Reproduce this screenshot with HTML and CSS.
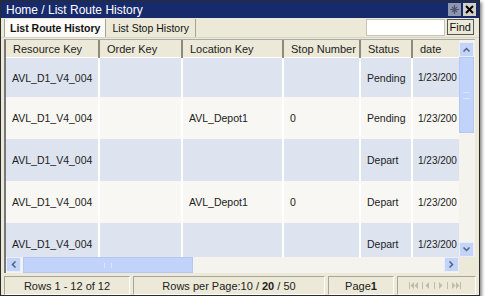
FILE: index.html
```html
<!DOCTYPE html>
<html lang="en">
<head>
<meta charset="UTF-8">
<title>List Route History</title>
<link rel="stylesheet" href="styles.css">
</head>
<body>
<div class="window">
    <div class="titlebar">
        <span class="title">Home / List Route History</span>
        <span class="tbtn pin">
            <svg width="11" height="11" viewBox="0 0 11 11"><path d="M5.5 1v9M1 5.5h9M3 3l5 5M8 3l-5 5" stroke="#556" stroke-width="1.2"/></svg>
        </span>
        <span class="tbtn close">
            <svg width="11" height="11" viewBox="0 0 11 11"><path d="M2 2l7 7M9 2l-7 7" stroke="#000" stroke-width="2"/></svg>
        </span>
    </div>
    <div class="toolbar">
        <div class="tabs">
            <span class="tab active">List Route History</span>
            <span class="tab">List Stop History</span>
        </div>
        <input class="search" type="text">
        <button class="find">Find</button>
    </div>
    <div class="gridwrap">
        <div class="grid">
            <div class="gridmain">
                <div class="gridview">
                    <table>
                        <colgroup>
                            <col style="width:93px"><col style="width:83px"><col style="width:101px">
                            <col style="width:77px"><col style="width:52px"><col style="width:70px">
                        </colgroup>
                        <thead>
                            <tr>
                                <th>Resource Key</th>
                                <th>Order Key</th>
                                <th>Location Key</th>
                                <th>Stop Number</th>
                                <th>Status</th>
                                <th>date</th>
                            </tr>
                        </thead>
                        <tbody>
                            <tr class="alt first"><td>AVL_D1_V4_004</td><td></td><td></td><td></td><td>Pending</td><td class="date">1/23/200</td></tr>
                            <tr><td>AVL_D1_V4_004</td><td></td><td>AVL_Depot1</td><td>0</td><td>Pending</td><td class="date">1/23/200</td></tr>
                            <tr class="alt"><td>AVL_D1_V4_004</td><td></td><td></td><td></td><td>Depart</td><td class="date">1/23/200</td></tr>
                            <tr><td>AVL_D1_V4_004</td><td></td><td>AVL_Depot1</td><td>0</td><td>Depart</td><td class="date">1/23/200</td></tr>
                            <tr class="alt"><td>AVL_D1_V4_004</td><td></td><td></td><td></td><td>Depart</td><td class="date">1/23/200</td></tr>
                        </tbody>
                    </table>
                </div>
                <div class="vscroll">
                    <span class="sbtn">
                        <svg width="7" height="5" viewBox="0 0 7 5"><path d="M0.5 4.5l3-3 3 3" fill="none" stroke="#4d6185" stroke-width="1.5"/></svg>
                    </span>
                    <span class="vthumb"><span class="grip v"></span></span>
                    <span class="vtrack"></span>
                    <span class="sbtn">
                        <svg width="7" height="5" viewBox="0 0 7 5"><path d="M0.5 0.5l3 3 3-3" fill="none" stroke="#4d6185" stroke-width="1.5"/></svg>
                    </span>
                </div>
            </div>
            <div class="hscrollrow">
                <div class="hscroll">
                    <span class="sbtn">
                        <svg width="5" height="7" viewBox="0 0 5 7"><path d="M4.5 0.5l-3 3 3 3" fill="none" stroke="#4d6185" stroke-width="1.5"/></svg>
                    </span>
                    <span class="hthumb"><span class="grip h"></span></span>
                    <span class="htrack"></span>
                    <span class="sbtn">
                        <svg width="5" height="7" viewBox="0 0 5 7"><path d="M0.5 0.5l3 3-3 3" fill="none" stroke="#4d6185" stroke-width="1.5"/></svg>
                    </span>
                </div>
                <div class="corner"></div>
            </div>
        </div>
    </div>
    <div class="footer">
        <span class="cell rows">Rows 1 - 12 of 12</span>
        <span class="cell perpage"><span>Rows per Page:10 / <b>20</b> / 50</span></span>
        <span class="cell page"><span>Page<b>1</b></span></span>
        <span class="cell nav">
            <svg width="60" height="7" viewBox="0 0 60 7" fill="#c0bca8">
                <path d="M2 0h1v7h-1zM7 0v7l-3.5-3.5zM11 0v7l-3.5-3.5z"/>
                <path d="M15 0h1v7h-1z"/>
                <path d="M22 0v7l-3.5-3.5z"/>
                <path d="M27 0h1v7h-1z"/>
                <path d="M32 0v7l3.5-3.5z"/>
                <path d="M40 0h1v7h-1z"/>
                <path d="M45 0v7l3.5-3.5zM49 0v7l3.5-3.5zM53 0h1v7h-1z"/>
            </svg>
        </span>
    </div>
</div>
</body>
</html>
```
FILE: styles.css
```css
body {
    margin: 0;
    padding: 0;
    background-color: #fff;
    font-family: "Liberation Sans", Arial, sans-serif;
}

.window {
    width: 478px;
    height: 294px;
    border: 1px solid #2b2b2b;
    background-color: #ece9d8;
    box-shadow: 2px 2px 3px rgba(0, 0, 0, 0.45);
    display: flex;
    flex-direction: column;
}

.titlebar {
    height: 17px;
    background-color: #172a6b;
    color: #fff;
    font-size: 12px;
    display: flex;
    align-items: center;
    padding: 0 3px 0 5px;
    gap: 2px;
}

.title {
    flex: 1;
}

.tbtn {
    width: 13px;
    height: 13px;
    display: flex;
    align-items: center;
    justify-content: center;
}

.tbtn.pin {
    background-color: #8c97b3;
}

.tbtn.close {
    background-color: #d4d0c8;
}

.toolbar {
    height: 19px;
    display: flex;
    align-items: center;
    padding: 0 5px 0 3px;
    border-bottom: 1px solid #d8d4c4;
}

.tabs {
    flex: 1;
    display: flex;
    height: 18px;
}

.tab {
    font-size: 10.5px;
    padding: 0 6px;
    display: flex;
    align-items: center;
    border-right: 1px solid #a6a390;
    color: #111;
}

.tab.active {
    background-color: #fbfaf6;
    font-weight: bold;
    font-size: 10.5px;
    padding: 0 5px;
    border-left: 1px solid #a6a390;
}

.search {
    width: 77px;
    height: 15px;
    border: 1px solid #c8c4b4;
    padding: 0;
    margin: 0 2px 0 0;
    background: #fff;
}

.find {
    height: 16px;
    font-family: "Liberation Sans", Arial, sans-serif;
    font-size: 11px;
    padding: 0 2px;
    border: 1px solid #555;
    background-color: #ece9d8;
    color: #111;
    margin-top: -2px;
}

.gridwrap {
    padding: 1px 3px 2px 3px;
}

.grid {
    border-left: 2px solid #777;
    border-top: 1px solid #aaa;
    width: 469px;
}

.gridmain {
    display: flex;
    height: 217px;
}

.gridview {
    width: 453px;
    overflow: hidden;
}

table {
    table-layout: fixed;
    width: 476px;
    border-collapse: collapse;
    font-size: 10.5px;
}

th {
    height: 17px;
    padding: 0 0 0 7px;
    text-align: left;
    font-weight: normal;
    background-color: #ece9d8;
    color: #222;
    border-right: 2px solid #8e8b7c;
    border-bottom: 1px solid #fff;
    font-size: 11px;
}

td {
    height: 42px;
    padding: 0 0 0 6px;
    border-right: 2px solid #fff;
    color: #222;
    white-space: nowrap;
    overflow: hidden;
    background-color: #f8f7f4;
}

td.date {
    padding-left: 5px;
    font-size: 10px;
}

tr.first td {
    height: 39px;
}

tr.alt td {
    background-color: #dde4f0;
}

.vscroll {
    width: 16px;
    display: flex;
    flex-direction: column;
    background-color: #f4f3ee;
}

.sbtn {
    width: 15px;
    height: 15px;
    background-color: #c4d4f6;
    border: 1px solid #e8eefc;
    box-sizing: border-box;
    display: flex;
    align-items: center;
    justify-content: center;
    flex: none;
}

.vscroll .sbtn:first-child {
    margin-top: 2px;
}

.vthumb {
    height: 74px;
    background-color: #c1d3fb;
    border: 1px solid #b5c8f3;
    display: flex;
    align-items: center;
    justify-content: center;
    margin-right: 1px;
}

.vtrack {
    flex: 1;
}

.grip.v {
    width: 7px;
    height: 5px;
    border-top: 1px solid #d9e4fd;
    border-bottom: 1px solid #d9e4fd;
}

.grip.h {
    width: 6px;
    height: 5px;
    border-left: 1px solid #d9e4fd;
    border-right: 1px solid #d9e4fd;
}

.hscrollrow {
    display: flex;
    height: 16px;
}

.hscroll {
    width: 453px;
    display: flex;
    background-color: #f4f3ee;
}

.hthumb {
    width: 168px;
    margin-left: 2px;
    background-color: #c1d3fb;
    border: 1px solid #b5c8f3;
    display: flex;
    align-items: center;
    justify-content: center;
}

.htrack {
    flex: 1;
}

.corner {
    width: 16px;
    background-color: #ece9d8;
}

.footer {
    display: flex;
    gap: 3px;
    padding: 1px 3px 0 3px;
    height: 19px;
}

.cell {
    font-size: 11px;
    color: #222;
    border-top: 1px solid #a8a598;
    border-left: 1px solid #a8a598;
    border-bottom: 1px solid #fff;
    border-right: 1px solid #fff;
    display: flex;
    align-items: center;
    justify-content: center;
}

.rows {
    width: 124px;
}

.perpage {
    width: 190px;
}

.page {
    width: 64px;
}

.nav {
    flex: 1;
}
```
